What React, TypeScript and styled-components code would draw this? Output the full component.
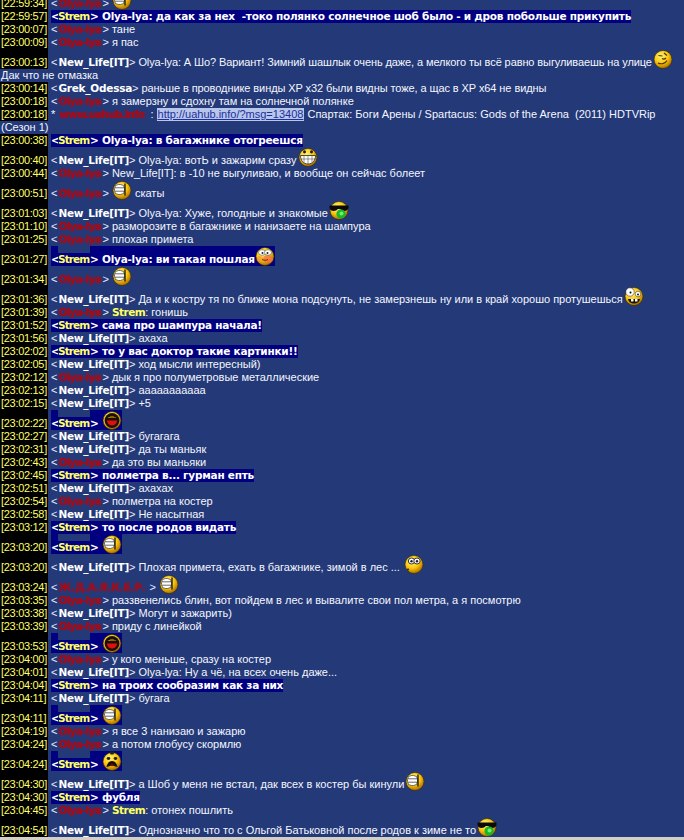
import React, { useId } from "react";
import styled, { createGlobalStyle } from "styled-components";

const Global = createGlobalStyle`
  html, body { margin: 0; padding: 0; height: 100%; background: #243a78; }
  #root { height: 100%; }
`;

const Page = styled.div`
  height: 840px;
  width: 684px;
  display: flex;
  flex-direction: column;
  overflow: hidden;
  background: #243a78;
  font-family: "Liberation Sans", Arial, sans-serif;
  font-size: 11px;
  line-height: 13px;
  color: #f4f6ff;
`;
const Log = styled.div`
  flex: 1;
  min-height: 0;
  overflow: hidden;
  margin-top: -10px;
`;
const Footer = styled.div`
  height: 3px;
  flex: none;
  background: #d4d0c8;
`;
const Row = styled.div<{ $tall?: boolean }>`
  display: flex;
  align-items: flex-end;
  height: ${(p) => (p.$tall ? 20 : 13)}px;
  white-space: pre;
`;
const Time = styled.div`
  align-self: stretch;
  width: 47px;
  padding-left: 1px;
  margin-right: 3px;
  flex: none;
  display: flex;
  align-items: flex-end;
  background: #000;
  color: #ffff66;
  font-size: 11px;
  letter-spacing: -0.3px;
`;
const Wrapped = styled.div`
  height: 13px;
  padding-left: 1px;
  white-space: pre;
`;
const Angle = styled.span`
  color: #e8ecff;
`;
const BoldName = styled.span`
  font-family: "DejaVu Sans", sans-serif;
  font-weight: 700;
  font-size: 10.5px;
  letter-spacing: -0.25px;
  margin-left: 1px;
  color: #fff;
`;
const RedName = styled.span<{ $w: number; $ls?: number }>`
  display: inline-block;
  width: ${(p) => p.$w}px;
  margin-left: 1px;
  font-family: "DejaVu Sans", sans-serif;
  font-weight: 700;
  font-size: 10.5px;
  letter-spacing: ${(p) => p.$ls ?? -0.7}px;
  color: #a00c18;
  text-shadow: 0 0 1px #b01020;
  filter: blur(0.6px);
`;
const YellowName = styled.span`
  font-family: "DejaVu Sans", sans-serif;
  font-weight: 700;
  font-size: 10.5px;
  letter-spacing: -0.5px;
  color: #ffff66;
`;
const Body = styled.span<{ $ls?: number }>`
  margin-left: 3px;
  letter-spacing: ${(p) => p.$ls ?? 0}px;
`;
const Link = styled.span`
  background: #b8c6ec;
  color: #20309a;
  text-decoration: underline;
  padding: 0 1px;
`;
const Hi = styled.span`
  align-self: stretch;
  display: flex;
  align-items: flex-end;
  background: #000080;
  color: #fff;
  font-family: "DejaVu Sans", sans-serif;
  font-weight: 700;
  font-size: 10.5px;
  letter-spacing: -0.24px;
`;
const HiLead = styled(Hi)`
  width: 7px;
  flex: none;
`;
const HiNick = styled.span`
  height: 13px;
  flex: none;
  width: 32px;
  background: #000080;
  color: #ffff66;
  font-family: "DejaVu Sans", sans-serif;
  font-weight: 700;
  font-size: 10.5px;
  letter-spacing: -0.9px;
`;
const Icon = styled.svg<{ $gap?: number }>`
  display: block;
  flex: none;
  width: 20px;
  height: 20px;
  margin-left: ${(p) => p.$gap ?? 0}px;
`;

type Kind = "peek" | "roll" | "grin" | "shades" | "blush" | "crazy" | "laugh" | "eyes" | "cry";

function Smiley({ kind, gap }: { kind: Kind; gap?: number }) {
  const id = useId();
  const dark = kind === "laugh";
  return (
    <Icon viewBox="0 0 20 20" $gap={gap}>
      <defs>
        <radialGradient id={id} cx="40%" cy="32%" r="70%">
          <stop offset="0%" stopColor="#fff27a" />
          <stop offset="55%" stopColor="#fbc70c" />
          <stop offset="100%" stopColor="#a86a00" />
        </radialGradient>
      </defs>
      <circle cx="10" cy="10.5" r="9" fill={`url(#${id})`} stroke="#3a2a00" strokeWidth="0.6" />
      {kind === "peek" && (
        <g>
          <rect x="2.500" y="4.500" width="10" height="10" rx="4" fill="#fff" stroke="#333" strokeWidth="0.700" />
          <path d="M3 7.800h9.500M3 11.200h9.500" stroke="#444" strokeWidth="0.800" fill="none" />
          <path d="M13 3.500v12" stroke="#111" strokeWidth="1.300" fill="none" />
        </g>
      )}
      {kind === "roll" && (
        <g fill="none" stroke="#4a3000" strokeWidth="1.100">
          <path d="M5 14c3 1.500 7 1 9-2.500" />
          <path d="M5.500 6.500l4 .5M11 4l3 2.500" />
          <path d="M9 9.500c1.500 1 3 .5 4-.5" />
        </g>
      )}
      {kind === "grin" && (
        <g>
          <ellipse cx="6.500" cy="4.800" rx="1.500" ry="1.600" fill="#2a1a00" />
          <ellipse cx="13.500" cy="4.800" rx="1.500" ry="1.600" fill="#2a1a00" />
          <path d="M2.500 8.500h15c0 5-3 8.500-7.500 8.500s-7.500-3.500-7.500-8.500z" fill="#fff" stroke="#222" strokeWidth="0.800" />
          <path d="M3 12h14M6 8.500v7M10 8.500v8.500M14 8.500v7" stroke="#555" strokeWidth="0.600" fill="none" />
        </g>
      )}
      {kind === "shades" && (
        <g>
          <path d="M0.500 5.500h19v2.500c-1 3-4 3.500-6.500 2.500l-2-1.500h-2l-2 1.500c-2.500 1-6 .5-6.500-2.500z" fill="#0a0a0a" />
          <circle cx="12" cy="14" r="4.600" fill="#19b52a" />
          <circle cx="12.500" cy="13.500" r="2" fill="#6cf06c" />
        </g>
      )}
      {kind === "blush" && (
        <g>
          <ellipse cx="13" cy="13" rx="5" ry="4" fill="#f0704a" opacity="0.75" />
          <ellipse cx="5" cy="13" rx="3" ry="3" fill="#f0904a" opacity="0.6" />
          <ellipse cx="7" cy="6.500" rx="3.500" ry="2.800" fill="#fff" stroke="#555" strokeWidth="0.600" />
          <ellipse cx="13" cy="6.500" rx="3.500" ry="2.800" fill="#fff" stroke="#555" strokeWidth="0.600" />
          <circle cx="7.500" cy="7" r="1" fill="#222" />
          <circle cx="12.500" cy="7" r="1" fill="#222" />
          <path d="M7 13.500c2 1 4 1 6 0" stroke="#6a1a00" strokeWidth="0.900" fill="none" />
        </g>
      )}
      {kind === "crazy" && (
        <g>
          <circle cx="6" cy="6" r="4.200" fill="#fff" stroke="#222" strokeWidth="0.500" />
          <circle cx="14" cy="8" r="2.800" fill="#fff" stroke="#222" strokeWidth="0.500" />
          <circle cx="6.500" cy="6.500" r="1" fill="#000" />
          <circle cx="14" cy="8.500" r="0.900" fill="#000" />
          <path d="M4 13h12c-1 3.500-3 4.500-6 4.500s-5-1-6-4.500z" fill="#1a1200" />
          <path d="M7 13v2.500h2.500V13M11 13v2.500h2.500V13" fill="#fff" />
        </g>
      )}
      {dark && (
        <g>
          <circle cx="10" cy="10.500" r="7.400" fill="#1a1000" />
          <path d="M5.500 8c2-2 7-2 9 0-2-.8-7-.8-9 0z" fill="#f7b500" />
          <path d="M4.800 10.500h10.400c-.5 3.500-2.500 5-5.200 5s-4.700-1.500-5.200-5z" fill="#e01010" />
        </g>
      )}
      {kind === "eyes" && (
        <g>
          <ellipse cx="7.500" cy="7" rx="3.200" ry="3" fill="#fff" stroke="#222" strokeWidth="0.900" />
          <ellipse cx="13" cy="7" rx="3.200" ry="3" fill="#fff" stroke="#222" strokeWidth="0.900" />
          <circle cx="7.500" cy="7.200" r="1.200" fill="#222" />
          <circle cx="13" cy="7.200" r="1.200" fill="#222" />
          <circle cx="4" cy="15.500" r="1.100" fill="#3a2a00" />
        </g>
      )}
      {kind === "cry" && (
        <g>
          <path d="M7.500 0.500h5l-1 3h-3z" fill="#222" />
          <ellipse cx="6.500" cy="7.500" rx="1.800" ry="1.400" fill="#222" />
          <ellipse cx="13.500" cy="7.500" rx="1.800" ry="1.400" fill="#222" />
          <path d="M4.500 16c1-4.500 3-6 5.500-6s4.500 1.500 5.500 6c-3-1.500-8-1.500-11 0z" fill="#1a1000" />
          <path d="M7.500 14.500c1-1.500 4-1.500 5 0z" fill="#d01010" />
        </g>
      )}
    </Icon>
  );
}

type Nick = "nl" | "olya" | "grek";
type Msg =
  | { t: string; nick: Nick; text?: string; icon?: Kind; after?: string; strem?: string; ls?: number }
  | { t: string; hi: string; icon?: Kind }
  | { t: string; server: true }
  | { t: string; redNick: string; icon: Kind }
  | { wrap: string };

const rows: Msg[] = [
  { t: "22:59:34", nick: "olya", icon: "peek" },
  { t: "22:59:57", hi: "Olya-lya: да как за нех  -токо полянко солнечное шоб было - и дров побольше прикупить" },
  { t: "23:00:07", nick: "olya", text: "тане" },
  { t: "23:00:09", nick: "olya", text: "я пас" },
  { t: "23:00:13", nick: "nl", ls: -0.1, text: "Olya-lya: А Шо? Вариант! Зимний шашлык очень даже, а мелкого ты всё равно выгуливаешь на улице", icon: "roll" },
  { wrap: "Дак что не отмазка" },
  { t: "23:00:14", nick: "grek", ls: -0.08, text: "раньше в проводнике винды XP x32 были видны тоже, а щас в XP x64 не видны" },
  { t: "23:00:18", nick: "olya", text: "я замерзну и сдохну там на солнечной полянке" },
  { t: "23:00:18", server: true },
  { wrap: "(Сезон 1)" },
  { t: "23:00:38", hi: "Olya-lya: в багажнике отогреешся" },
  { t: "23:00:40", nick: "nl", text: "Olya-lya: вотЬ и зажарим сразу", icon: "grin" },
  { t: "23:00:44", nick: "olya", text: "New_Life[IT]: в -10 не выгуливаю, и вообще он сейчас болеет" },
  { t: "23:00:51", nick: "olya", icon: "peek", after: "скаты" },
  { t: "23:01:03", nick: "nl", text: "Olya-lya: Хуже, голодные и знакомые", icon: "shades" },
  { t: "23:01:10", nick: "olya", text: "разморозите в багажнике и нанизаете на шампура" },
  { t: "23:01:25", nick: "olya", text: "плохая примета" },
  { t: "23:01:27", hi: "Olya-lya: ви такая пошлая", icon: "blush" },
  { t: "23:01:34", nick: "olya", icon: "peek" },
  { t: "23:01:36", nick: "nl", text: "Да и к костру тя по ближе мона подсунуть, не замерзнешь ну или в край хорошо протушешься", icon: "crazy" },
  { t: "23:01:39", nick: "olya", strem: "Strem", text: ": гонишь" },
  { t: "23:01:52", hi: "сама про шампура начала!" },
  { t: "23:01:56", nick: "nl", text: "ахаха" },
  { t: "23:02:02", hi: "то у вас доктор такие картинки!!" },
  { t: "23:02:05", nick: "nl", text: "ход мысли интересный)" },
  { t: "23:02:12", nick: "olya", text: "дык я про полуметровые металлические" },
  { t: "23:02:13", nick: "nl", text: "ааааааааааа" },
  { t: "23:02:15", nick: "nl", text: "+5" },
  { t: "23:02:22", hi: "", icon: "laugh" },
  { t: "23:02:27", nick: "nl", text: "бугагага" },
  { t: "23:02:31", nick: "nl", text: "да ты маньяк" },
  { t: "23:02:43", nick: "olya", text: "да это вы маньяки" },
  { t: "23:02:45", hi: "полметра в... гурман епть" },
  { t: "23:02:51", nick: "nl", text: "ахахах" },
  { t: "23:02:54", nick: "olya", text: "полметра на костер" },
  { t: "23:02:58", nick: "nl", text: "Не насытная" },
  { t: "23:03:12", hi: "то после родов видать" },
  { t: "23:03:20", hi: "", icon: "peek" },
  { t: "23:03:20", nick: "nl", text: "Плохая примета, ехать в багажнике, зимой в лес ... ", icon: "eyes" },
  { t: "23:03:24", redNick: "Ж.Д.А.Я.К.Е.Р.", icon: "peek" },
  { t: "23:03:35", nick: "olya", text: "раззвенелись блин, вот пойдем в лес и вывалите свои пол метра, а я посмотрю" },
  { t: "23:03:38", nick: "nl", text: "Могут и зажарить)" },
  { t: "23:03:39", nick: "olya", text: "приду с линейкой" },
  { t: "23:03:53", hi: "", icon: "laugh" },
  { t: "23:04:00", nick: "olya", text: "у кого меньше, сразу на костер" },
  { t: "23:04:01", nick: "nl", text: "Olya-lya: Ну а чё, на всех очень даже..." },
  { t: "23:04:04", hi: "на троих сообразим как за них" },
  { t: "23:04:11", nick: "nl", text: "бугага" },
  { t: "23:04:11", hi: "", icon: "peek" },
  { t: "23:04:19", nick: "olya", text: "я все 3 нанизаю и зажарю" },
  { t: "23:04:24", nick: "olya", text: "а потом глобусу скормлю" },
  { t: "23:04:24", hi: "", icon: "cry" },
  { t: "23:04:30", nick: "nl", text: "а Шоб у меня не встал, дак всех в костер бы кинули", icon: "peek" },
  { t: "23:04:30", hi: "фубля" },
  { t: "23:04:45", nick: "olya", strem: "Strem", text: ": отонех пошлить" },
  { t: "23:04:54", nick: "nl", text: "Однозначно что то с Ольгой Батьковной после родов к зиме не то", icon: "shades" },
];

const Stamp = ({ t }: { t: string }) => <Time>[{t}]</Time>;

function NickTag({ nick }: { nick: Nick }) {
  return (
    <>
      <Angle>&lt;</Angle>
      {nick === "olya" ? (
        <RedName $w={44}>Olya-lya</RedName>
      ) : (
        <BoldName>{nick === "nl" ? "New_Life[IT]" : "Grek_Odessa"}</BoldName>
      )}
      <Angle>&gt;</Angle>
    </>
  );
}

function Line({ m }: { m: Msg }) {
  if ("wrap" in m) return <Wrapped>{m.wrap}</Wrapped>;
  if ("server" in m)
    return (
      <Row>
        <Stamp t={m.t} />
        <span>* </span>
        <RedName $w={88} $ls={-0.8}>www.uahub.info</RedName>
        <span> : </span>
        <Link>http://uahub.info/?msg=13408</Link>
        <span> Спартак: Боги Арены / Spartacus: Gods of the Arena  (2011) HDTVRip</span>
      </Row>
    );
  if ("redNick" in m)
    return (
      <Row $tall>
        <Stamp t={m.t} />
        <Angle>&lt;</Angle>
        <RedName $w={88} $ls={-0.2}>Ж.Д.А.Я.К.Е.Р.</RedName>
        <Angle> &gt; </Angle>
        <Smiley kind={m.icon} />
      </Row>
    );
  if ("hi" in m)
    return (
      <Row $tall={!!m.icon}>
        <Stamp t={m.t} />
        <HiLead>&lt;</HiLead>
        <HiNick>Strem</HiNick>
        <Hi>
          &gt; {m.hi}
          {m.icon && <Smiley kind={m.icon} />}
        </Hi>
      </Row>
    );
  return (
    <Row $tall={!!m.icon}>
      <Stamp t={m.t} />
      <NickTag nick={m.nick} />
      {m.strem && (
        <Body>
          <YellowName>{m.strem}</YellowName>
        </Body>
      )}
      {m.text && (m.strem ? <span>{m.text}</span> : <Body $ls={m.ls}>{m.text}</Body>)}
      {m.icon && (m.text ? <Smiley kind={m.icon} gap={1} /> : <><Angle> </Angle><Smiley kind={m.icon} /></>)}
      {m.after && <Body>{m.after}</Body>}
    </Row>
  );
}

export default function App() {
  return (
    <Page>
      <Global />
      <Log>
        {rows.map((m, i) => (
          <Line key={i} m={m} />
        ))}
      </Log>
      <Footer />
    </Page>
  );
}
